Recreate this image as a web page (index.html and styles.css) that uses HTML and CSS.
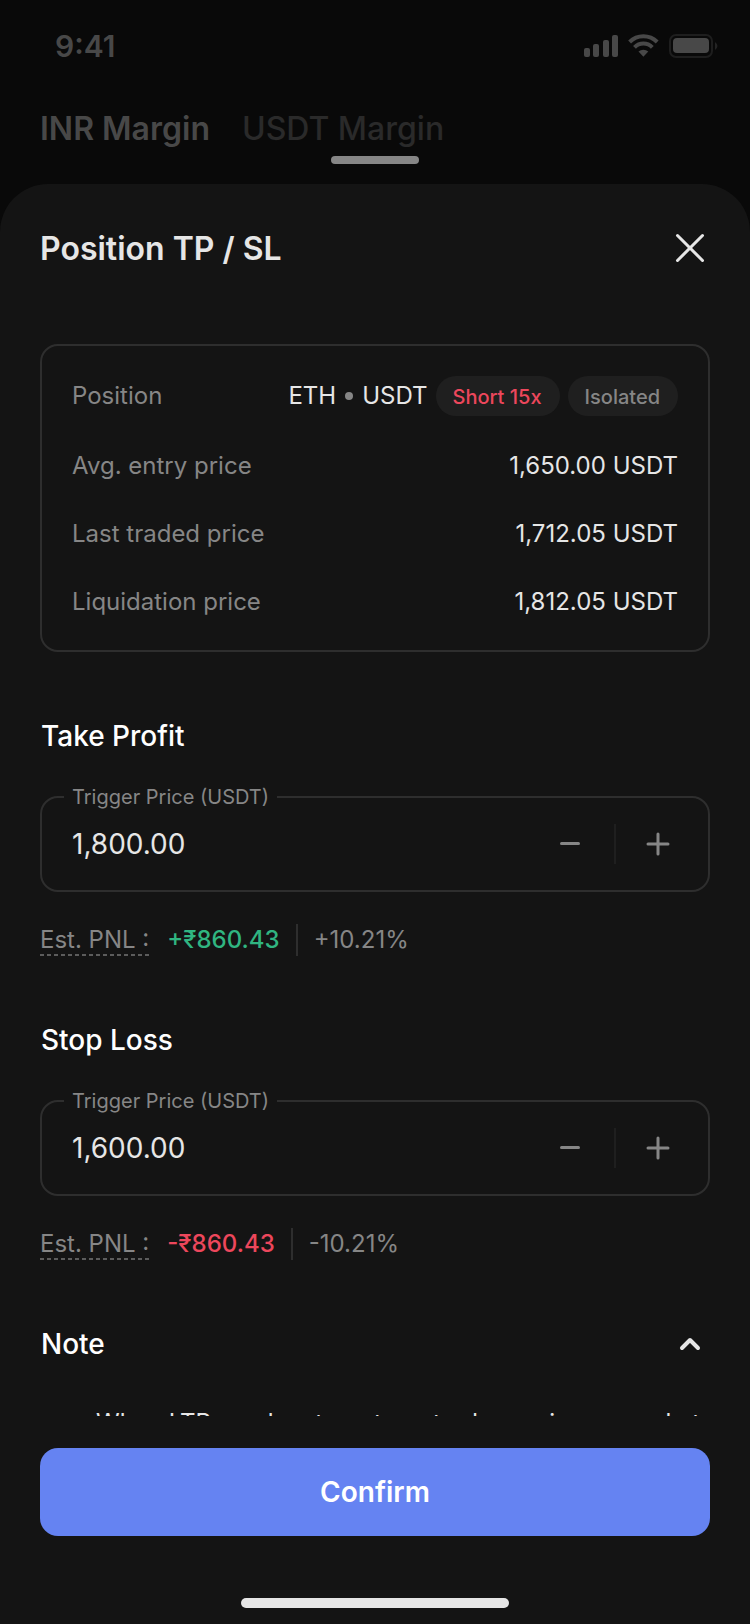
FILE: index.html
```html
<!DOCTYPE html>
<html lang="en">
<head>
<meta charset="utf-8">
<meta name="viewport" content="width=device-width, initial-scale=1">
<title>Position TP / SL</title>
<link rel="stylesheet" href="styles.css">
</head>
<body>
<div class="screen">
  <header class="backdrop">
    <div class="status">
      <time class="clock">9:41</time>
      <svg class="status-icons" width="134" height="24" viewBox="0 0 134 24" aria-hidden="true">
        <g fill="#484848">
          <rect x="0" y="14" width="6" height="9" rx="2"/>
          <rect x="9" y="10" width="6" height="13" rx="2"/>
          <rect x="19" y="6" width="6" height="17" rx="2"/>
          <rect x="28" y="1" width="6" height="22" rx="2"/>
          <path d="M54.500 17.500a7.500 7.500 0 0 1 9.800 0l-4.900 5.300z"/>
        </g>
        <path d="M50.500 13.300a12.500 12.500 0 0 1 17.800 0M45.600 8a19.500 19.500 0 0 1 27.600 0" fill="none" stroke="#484848" stroke-width="4"/>
        <rect x="86" y="1" width="42" height="22" rx="6" fill="none" stroke="#1e1e1e" stroke-width="2"/>
        <rect x="89" y="4" width="36" height="15" rx="4" fill="#484848"/>
        <path d="M131 8q5 4 0 8z" fill="#242424"/>
      </svg>
    </div>
    <nav class="tabs">
      <a class="tab tab-active" href="#inr">INR Margin</a>
      <a class="tab" href="#usdt">USDT Margin</a>
    </nav>
    <div class="handle"></div>
  </header>

  <main class="sheet">
    <div class="sheet-head">
      <h1 class="title">Position TP / SL</h1>
      <button class="icon-btn close" type="button" aria-label="Close">
        <svg width="40" height="40" viewBox="0 0 40 40"><path d="M7.500 7.500l25 25M32.500 7.500l-25 25"/></svg>
      </button>
    </div>

    <div class="content">
      <dl class="summary">
        <div class="row row-position">
          <dt>Position</dt>
          <dd class="pair"><span class="symbol">ETH<i class="dot"></i>USDT</span><span class="chip chip-short">Short 15x</span><span class="chip">Isolated</span></dd>
        </div>
        <div class="row"><dt>Avg. entry price</dt><dd>1,650.00 USDT</dd></div>
        <div class="row"><dt>Last traded price</dt><dd>1,712.05 USDT</dd></div>
        <div class="row"><dt>Liquidation price</dt><dd>1,812.05 USDT</dd></div>
      </dl>

      <section class="block">
        <h2 class="heading">Take Profit</h2>
        <div class="field">
          <label class="field-label" for="tp">Trigger Price (USDT)</label>
          <input class="field-input" id="tp" type="text" inputmode="decimal" value="1,800.00">
          <button class="icon-btn step" type="button" aria-label="Decrease take profit"><svg width="28" height="28" viewBox="0 0 28 28"><path d="M5.500 13.500h17"/></svg></button>
          <span class="split"></span>
          <button class="icon-btn step" type="button" aria-label="Increase take profit"><svg width="28" height="28" viewBox="0 0 28 28"><path d="M4 14h20M14 4v20"/></svg></button>
        </div>
        <p class="pnl"><span class="pnl-label">Est. PNL :</span><span class="gain">+₹860.43</span><span class="pct">+10.21%</span></p>
      </section>

      <section class="block">
        <h2 class="heading">Stop Loss</h2>
        <div class="field">
          <label class="field-label" for="sl">Trigger Price (USDT)</label>
          <input class="field-input" id="sl" type="text" inputmode="decimal" value="1,600.00">
          <button class="icon-btn step" type="button" aria-label="Decrease stop loss"><svg width="28" height="28" viewBox="0 0 28 28"><path d="M5.500 13.500h17"/></svg></button>
          <span class="split"></span>
          <button class="icon-btn step" type="button" aria-label="Increase stop loss"><svg width="28" height="28" viewBox="0 0 28 28"><path d="M4 14h20M14 4v20"/></svg></button>
        </div>
        <p class="pnl"><span class="pnl-label">Est. PNL :</span><span class="loss">-₹860.43</span><span class="pct">-10.21%</span></p>
      </section>

      <section class="note">
        <div class="note-head">
          <h2 class="heading">Note</h2>
          <button class="icon-btn close" type="button" aria-label="Collapse note"><svg width="40" height="40" viewBox="0 0 40 40"><path class="chevron" d="M12 24l8-8 8 8"/></svg></button>
        </div>
        <ul class="note-list"><li>When LTP reaches target our trade receives a market</li></ul>
      </section>
    </div>

    <footer class="footer">
      <button class="confirm" type="button">Confirm</button>
      <div class="home"></div>
    </footer>
  </main>
</div>
</body>
</html>
```

FILE: styles.css
```css
* {
  box-sizing: border-box;
}

body {
  margin: 0;
  background: #090909;
  color: #e6e6e6;
  font-family: Inter, "Noto Sans", sans-serif;
  font-size: 24px;
  line-height: 32px;
}

h1, h2, p, dl, dd, ul {
  margin: 0;
  padding: 0;
}

button, input {
  border: 0;
  padding: 0;
  background: none;
  color: inherit;
  font: inherit;
}

.screen {
  display: flex;
  flex-direction: column;
  height: 100vh;
}

.backdrop {
  display: flex;
  flex-direction: column;
  padding-bottom: 20px;
}

.status {
  display: flex;
  justify-content: space-between;
  align-items: center;
  height: 92px;
  padding: 0 32px 0 55px;
}

.clock {
  color: #484848;
  font-size: 30px;
  font-weight: 600;
}

.tabs {
  display: flex;
  gap: 32px;
  padding: 17px 40px 7px;
  font-size: 32px;
  line-height: 40px;
}

.tab {
  color: #2a2a2a;
  text-decoration: none;
  font-weight: 500;
}

.tab-active {
  color: #484848;
  font-weight: 600;
}

.handle {
  align-self: center;
  width: 88px;
  height: 8px;
  border-radius: 4px;
  background: #868686;
}

.sheet {
  display: flex;
  flex: 1;
  flex-direction: column;
  min-height: 0;
  border-radius: 48px 48px 0 0;
  background: #141414;
}

.sheet-head {
  display: flex;
  justify-content: space-between;
  align-items: center;
  padding: 44px 40px 76px;
}

.title {
  padding-top: 2px;
  font-size: 32px;
  line-height: 38px;
  font-weight: 600;
}

.icon-btn {
  display: flex;
  cursor: pointer;
}

.icon-btn svg {
  fill: none;
  stroke: currentColor;
  stroke-width: 3;
  stroke-linecap: round;
  stroke-linejoin: round;
}

.content {
  flex: 1;
  min-height: 0;
  overflow: hidden;
  padding: 0 40px;
}

.summary {
  display: flex;
  flex-direction: column;
  gap: 32px;
  padding: 30px;
  border: 2px solid #2e2e2e;
  border-radius: 18px;
  line-height: 36px;
}

.row {
  display: flex;
  justify-content: space-between;
  align-items: center;
}

.row dt {
  color: #868686;
}

.pair {
  display: flex;
  align-items: center;
  gap: 8px;
}

.symbol {
  display: flex;
  align-items: center;
}

.dot {
  width: 8px;
  height: 8px;
  margin: 0 9px;
  border-radius: 50%;
  background: #868686;
}

.chip {
  padding: 5px 18px 3px 17px;
  border-radius: 20px;
  background: #1f1f1f;
  color: #868686;
  font-size: 20px;
  line-height: 32px;
  font-weight: 500;
}

.chip-short {
  color: #ed475c;
}

.block {
  padding-top: 64px;
}

.heading {
  padding-left: 1px;
  color: #fff;
  font-size: 28px;
  line-height: 40px;
  font-weight: 500;
}

.field {
  position: relative;
  display: flex;
  align-items: center;
  height: 96px;
  margin-top: 40px;
  padding: 0 36px 0 30px;
  border: 2px solid #2e2e2e;
  border-radius: 18px;
}

.field-label {
  position: absolute;
  top: -17px;
  left: 22px;
  padding: 0 8px;
  background: #141414;
  color: #868686;
  font-size: 20px;
}

.field-input {
  flex: 1;
  min-width: 0;
  font-size: 28px;
  line-height: 40px;
}

.step {
  color: #868686;
}

.split {
  width: 2px;
  height: 40px;
  margin: 0 28px 0 30px;
  background: #1f1f1f;
}

.pnl {
  display: flex;
  align-items: center;
  margin-top: 32px;
}

.pnl-label {
  margin-right: 18px;
  background: repeating-linear-gradient(90deg, #5c5c5c 0 4px, transparent 4px 7px) left bottom / 100% 2px no-repeat;
  color: #868686;
}

.gain {
  color: #30b581;
  font-weight: 500;
}

.loss {
  color: #ed475c;
  font-weight: 500;
}

.pct {
  margin-left: 16px;
  padding-left: 16px;
  border-left: 2px solid #2e2e2e;
  color: #868686;
}

.note {
  padding-top: 64px;
}

.note-head {
  display: flex;
  justify-content: space-between;
  align-items: center;
}

.icon-btn .chevron {
  stroke-width: 4;
}

.note-list {
  padding: 43px 0 0 56px;
  list-style: none;
  white-space: nowrap;
}

.footer {
  display: flex;
  flex-direction: column;
  align-items: center;
  padding: 32px 40px 16px;
}

.confirm {
  align-self: stretch;
  height: 88px;
  border-radius: 18px;
  background: #6583f2;
  color: #fff;
  font-size: 28px;
  font-weight: 600;
  cursor: pointer;
}

.home {
  width: 40%;
  height: 10px;
  margin-top: 62px;
  border-radius: 5px;
  background: #e6e6e6;
}
```
